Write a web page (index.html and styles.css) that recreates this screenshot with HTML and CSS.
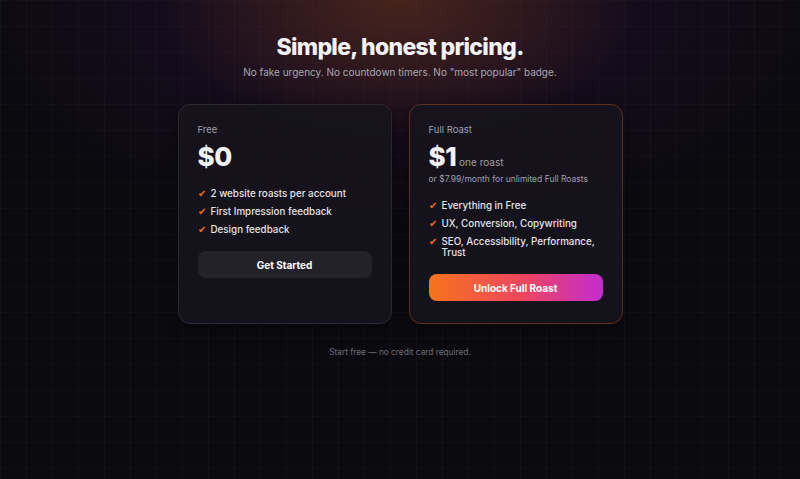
FILE: index.html
```html
<!DOCTYPE html>
<html lang="en">
<head>
    <meta charset="UTF-8">
    <title>Pricing</title>

    <link rel="stylesheet" href="styles.css">
</head>
<body>
<div class="glow"></div>
<section class="pricing">
    <h1 class="title">Simple, honest pricing.</h1>
    <p class="subtitle">No fake urgency. No countdown timers. No "most popular" badge.</p>

    <div class="plans">
        <div class="plan">
            <div class="plan-name">Free</div>
            <div class="price"><span class="amount">$0</span></div>
            <ul class="features">
                <li><span class="check">✔</span>2 website roasts per account</li>
                <li><span class="check">✔</span>First Impression feedback</li>
                <li><span class="check">✔</span>Design feedback</li>
            </ul>
            <button class="btn btn-dark">Get Started</button>
        </div>

        <div class="plan plan-full">
            <div class="plan-name">Full Roast</div>
            <div class="price"><span class="amount">$1</span><span class="per">one roast</span></div>
            <div class="price-note">or $7.99/month for unlimited Full Roasts</div>
            <ul class="features">
                <li><span class="check">✔</span>Everything in Free</li>
                <li><span class="check">✔</span>UX, Conversion, Copywriting</li>
                <li><span class="check">✔</span>SEO, Accessibility, Performance, Trust</li>
            </ul>
            <button class="btn btn-gradient">Unlock Full Roast</button>
        </div>
    </div>

    <p class="footnote">Start free — no credit card required.</p>
</section>
</body>
</html>
```

FILE: styles.css
```css
html, body {
    margin: 0;
    height: 100%;
}

body {
    background-color: #0b0a0f;
    background-image:
        linear-gradient(rgba(255,255,255,0.022) 1px, transparent 1px),
        linear-gradient(90deg, rgba(255,255,255,0.022) 1px, transparent 1px);
    background-size: 26px 26px;
    font-family: Inter, "Liberation Sans", sans-serif;
    color: #f2f2f4;
    position: relative;
    overflow: hidden;
}

.glow {
    position: absolute;
    left: 0;
    top: 0;
    width: 100%;
    height: 280px;
    background:
        radial-gradient(ellipse 240px 140px at 50% 0, rgba(118,62,10,0.45), transparent),
        radial-gradient(ellipse 440px 220px at 50% 10px, rgba(60,20,80,0.42), transparent);
    pointer-events: none;
}

.pricing {
    position: relative;
    display: flex;
    flex-direction: column;
    align-items: center;
    padding-top: 32px;
}

.title {
    margin: 0;
    font-size: 23px;
    font-weight: 800;
    letter-spacing: -0.03em;
    line-height: 30px;
}

.subtitle {
    margin: 4px 0 0;
    font-size: 10px;
    color: #a9a8b1;
}

.plans {
    display: grid;
    grid-template-columns: 214px 214px;
    gap: 17px;
    margin-top: 26px;
}

.plan {
    background: rgba(22,20,28,0.92);
    border: 1px solid #2a2830;
    border-radius: 12px;
    padding: 19px 19px 22px;
    display: flex;
    flex-direction: column;
    box-shadow: 0 4px 16px rgba(0,0,0,0.4);
}

.plan-full {
    border-color: #5e321a;
}

.plan-name {
    font-size: 9.5px;
    color: #a09fa8;
    line-height: 12px;
}

.price {
    display: flex;
    align-items: baseline;
    margin-top: 6px;
}

.amount {
    font-size: 26px;
    font-weight: 800;
    letter-spacing: -0.02em;
    line-height: 30px;
}

.per {
    font-size: 10px;
    color: #a09fa8;
    margin-left: 3px;
}

.price-note {
    font-size: 8.5px;
    color: #a09fa8;
    margin-top: 2px;
}

.features {
    list-style: none;
    margin: 16px 0 0;
    padding: 0;
    display: flex;
    flex-direction: column;
    gap: 7px;
}

.features li {
    display: flex;
    font-size: 9.8px;
    line-height: 11px;
    color: #e4e3e8;
    font-weight: 500;
}

.check {
    color: #f26b1d;
    width: 13px;
    flex-shrink: 0;
    font-size: 10px;
}

.btn {
    margin-top: 16px;
    height: 27px;
    border: none;
    border-radius: 8px;
    font-family: inherit;
    font-size: 10px;
    font-weight: 700;
    color: #ffffff;
    cursor: pointer;
}

.btn-dark {
    background: #232228;
}

.btn-gradient {
    background: linear-gradient(90deg, #f7731c 0%, #ec4560 55%, #c42bd0 100%);
}

.footnote {
    margin: 23px 0 0;
    font-size: 8.3px;
    color: #6e6d76;
}
```
